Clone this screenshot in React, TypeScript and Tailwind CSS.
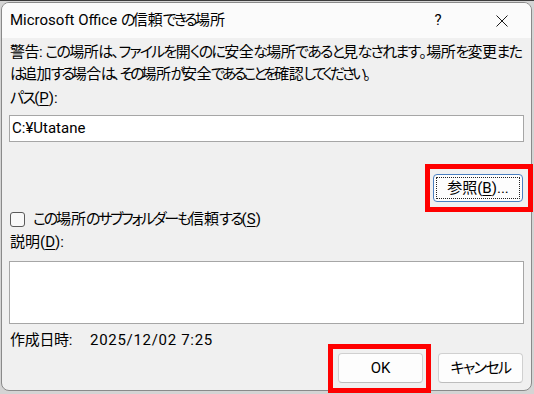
import React from "react";

const U = ({ children }: { children: React.ReactNode }) => (
  <span className="underline underline-offset-2 decoration-1">{children}</span>
);

const KANA_CLASS: Record<string, string> = {
  a: "tracking-[-1.75px]",
  b: "tracking-[-2.2px]",
  c: "tracking-[-2.6px]",
  d: "tracking-[-1.6px]",
  e: "tracking-[-3.1px]",
};

const isKana = (ch: string) => {
  const c = ch.charCodeAt(0);
  return c >= 0x3041 && c <= 0x30ff && c !== 0x30fb;
};

function J({ t, k }: { t: string; k: string }) {
  const parts: { s: string; kana: boolean }[] = [];
  for (const ch of Array.from(t)) {
    const kana = isKana(ch);
    const last = parts[parts.length - 1];
    if (last && last.kana === kana) last.s += ch;
    else parts.push({ s: ch, kana });
  }
  return (
    <>
      {parts.map((p, i) =>
        p.kana ? (
          <span key={i} className={KANA_CLASS[k]}>
            {p.s}
          </span>
        ) : (
          <span key={i}>{p.s}</span>
        )
      )}
    </>
  );
}

export default function App() {
  return (
    <div className="relative w-[534px] h-[394px] overflow-hidden bg-[#d4d4d4] border-t border-[#3c3c3c] font-['Roboto','Noto_Sans_CJK_JP',sans-serif] [font-feature-settings:'palt'] text-[15px] text-[#000]">
      <div className="ml-[1px] mt-[1px] w-[531px] h-[389px] flex flex-col rounded-[8px] border border-[#8a8a8a] bg-[#f0f0f0] overflow-hidden">
        {/* title bar */}
        <div className="h-[35px] shrink-0 flex items-center bg-[#fbfbfb]">
          <div className="pl-[8px] flex-1 leading-none whitespace-nowrap">
            Microsoft Office <J t="の信頼できる場所" k="c" />
          </div>
          <div className="w-[70px] h-full flex items-center justify-center text-[15px]">?</div>
          <div className="w-[58px] h-full flex items-center justify-center">
            <svg width="12" height="12" viewBox="0 0 12 12">
              <path d="M0.5 0.5 L11.5 11.5 M11.5 0.5 L0.5 11.5" stroke="#1a1a1a" strokeWidth="1" fill="none" />
            </svg>
          </div>
        </div>

        {/* body */}
        <div className="flex flex-col pl-[7px] pr-[7px]">
          <p className="pt-[3px] pl-[1px] leading-[22px] whitespace-nowrap tracking-[-0.5px]">
            <J t="警告: この場所は、ファイルを開くのに安全な場所であると見なされます。場所を変更また" k="a" />
            <br />
            <J t="は追加する場合は、その場所が安全であることを確認してください。" k="e" />
          </p>
          <div className="mt-[2px] pl-[1px] leading-[22px]">
            <J t="パス" k="a" />(<U>P</U>):
          </div>
          <div className="mt-[6px] h-[27px] bg-white border border-[#a6a6a6] flex items-center pl-[2px]">
            C:¥Utatane
          </div>

          <div className="mt-[32px] self-end mr-[1px] relative w-[90px] h-[28px] rounded-[4px] border border-[#4a7fc0] bg-[#fdfdfd] flex items-center justify-center">
            <div className="absolute inset-[2px] border border-dotted border-[#222] rounded-[1px]" />
            <span>
              参照(<U>B</U>)...
            </span>
          </div>

          <div className="mt-[6px] h-[22px] flex items-center">
            <div className="ml-[1px] w-[15px] h-[15px] rounded-[3px] border border-[#5a5a5a] bg-[#f8f8f8]" />
            <span className="ml-[8px] leading-[22px] whitespace-nowrap">
              <J t="この場所のサブフォルダーも信頼する" k="b" />(<U>S</U>)
            </span>
          </div>

          <div className="mt-[1px] pl-[1px] leading-[22px]">
            説明(<U>D</U>):
          </div>
          <div className="mt-[8px] h-[63px] bg-white border border-[#a6a6a6]" />

          <div className="mt-[5px] pl-[1px] leading-[22px] flex">
            <span className="w-[80px] tracking-[-0.3px]">作成日時:</span>
            <span className="tracking-[0.7px]">2025/12/02 7:25</span>
          </div>

          <div className="mt-[2px] flex justify-end gap-[15px] mr-[1px]">
            <div className="w-[85px] h-[30px] rounded-[4px] border border-[#d0d0d0] border-b-[#bdbdbd] bg-[#fdfdfd] flex items-center justify-center">
              OK
            </div>
            <div className="w-[85px] h-[30px] rounded-[4px] border border-[#d0d0d0] border-b-[#bdbdbd] bg-[#fdfdfd] flex items-center justify-center">
              <J t="キャンセル" k="d" />
            </div>
          </div>
        </div>
      </div>

      {/* annotation boxes */}
      <div className="absolute left-[425px] top-[163px] w-[108px] h-[48px] border-[5px] border-[#ff0000]" />
      <div className="absolute left-[328px] top-[343px] w-[103px] h-[49px] border-[5px] border-[#ff0000]" />
    </div>
  );
}
